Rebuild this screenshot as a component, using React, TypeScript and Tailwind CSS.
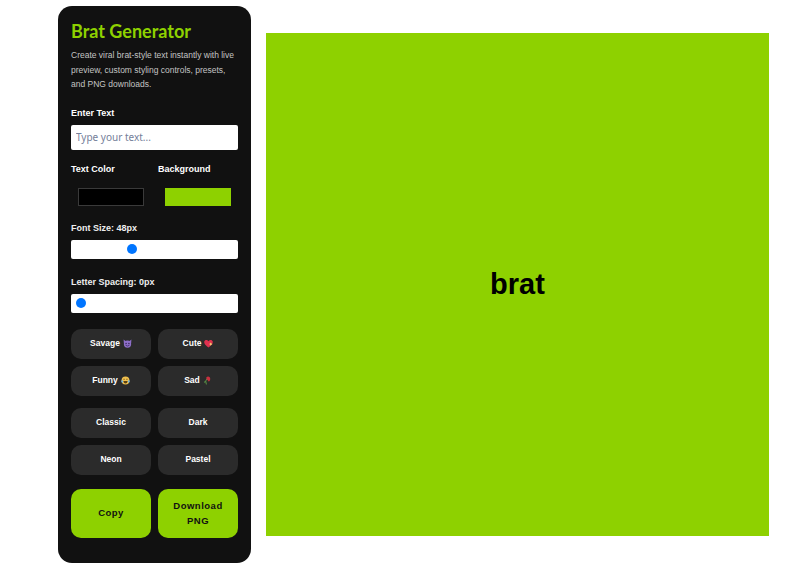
const bodyFont = "font-['Liberation_Sans',Arial,sans-serif]"

function DevilIcon() {
  return (
    <svg viewBox="0 0 16 16" className="w-[9px] h-[9px] shrink-0">
      <path d="M1 1 L5 4 L11 4 L15 1 L14.5 7 L1.5 7 Z" fill="#8e6fc9" />
      <circle cx="8" cy="9" r="6.5" fill="#8e6fc9" />
      <circle cx="5.5" cy="8" r="1.2" fill="#2f1f4d" />
      <circle cx="10.5" cy="8" r="1.2" fill="#2f1f4d" />
      <path d="M4.5 11 Q8 14 11.5 11" stroke="#2f1f4d" strokeWidth="1.2" fill="none" />
    </svg>
  )
}

function HeartIcon() {
  return (
    <svg viewBox="0 0 16 16" className="w-[9px] h-[9px] shrink-0">
      <path d="M8 15 C1 10 0 7 0.5 4.5 C1.2 1.5 5.5 0.5 8 4 C10.5 0.5 14.8 1.5 15.5 4.5 C16 7 15 10 8 15 Z" fill="#e0314f" />
      <path d="M12 6 L13 8 L15 9 L13 10 L12 12 L11 10 L9 9 L11 8 Z" fill="#f7d774" />
    </svg>
  )
}

function LaughIcon() {
  return (
    <svg viewBox="0 0 16 16" className="w-[9px] h-[9px] shrink-0">
      <circle cx="8" cy="8" r="7" fill="#f2c14e" />
      <path d="M4 6 Q5.5 4.5 7 6.5 M9 6.5 Q10.5 4.5 12 6" stroke="#5b4214" strokeWidth="1.1" fill="none" />
      <path d="M4 9 H12 Q11 13.5 8 13.5 Q5 13.5 4 9 Z" fill="#5b4214" />
      <path d="M0.5 8 Q0 12 3 12 Q4.5 10 3 7.5 Z" fill="#6fb7e8" />
      <path d="M15.5 8 Q16 12 13 12 Q11.5 10 13 7.5 Z" fill="#6fb7e8" />
    </svg>
  )
}

function WiltedRoseIcon() {
  return (
    <svg viewBox="0 0 16 16" className="w-[9px] h-[9px] shrink-0">
      <path d="M6 15 Q3 8 7 5" stroke="#5f9e4a" strokeWidth="1.6" fill="none" />
      <path d="M4.5 9 Q1.5 9 2 12 Q4.5 12 4.8 10 Z" fill="#5f9e4a" />
      <path d="M6 2 Q9 -0.5 12 2 Q14 6 11.5 9 Q10 10.5 9 8 Q7 7 6 5 Z" fill="#c9303f" />
    </svg>
  )
}

function PresetButton({ label, icon }: { label: string; icon?: React.ReactNode }) {
  return (
    <button
      type="button"
      className="h-[30px] rounded-[10px] bg-[#2b2b2b] text-white text-[8.5px] font-bold flex items-center justify-center gap-[3px]"
    >
      {label}
      {icon}
    </button>
  )
}

export default function App() {
  return (
    <div className={`h-[569px] w-[800px] bg-white flex items-center gap-[15px] pl-[58px] ${bodyFont}`}>
      {/* Controls */}
      <aside className="w-[193px] h-[557px] shrink-0 rounded-[14px] bg-[#111111] px-[13px] pt-[14px] flex flex-col">
        <h1 className="font-['Lato',sans-serif] text-[18px] leading-[22px] font-bold text-[#8ed100]">
          Brat Generator
        </h1>
        <p className="mt-[6px] text-[8.5px] leading-[14.5px] text-[#c4c4c4]">
          Create viral brat-style text instantly with live preview, custom styling controls, presets, and PNG downloads.
        </p>

        <label className="mt-[15px] text-[9px] leading-[12px] font-bold text-white">Enter Text</label>
        <input
          type="text"
          placeholder="Type your text..."
          className="mt-[6px] h-[25px] w-full rounded-[2px] bg-white px-[5px] font-['Noto_Sans',sans-serif] text-[10px] text-black placeholder:text-[#75809a] outline-none"
        />

        <div className="mt-[13px] grid grid-cols-2 gap-[7px] text-[9px] leading-[12px] font-bold text-white">
          <label>Text Color</label>
          <label>Background</label>
        </div>
        <div className="mt-[13px] grid grid-cols-2 gap-[7px]">
          <div className="px-[7px]">
            <div className="h-[18px] bg-black border border-[#3a3a3a]" />
          </div>
          <div className="px-[7px]">
            <div className="h-[18px] bg-[#8ed100]" />
          </div>
        </div>

        <label className="mt-[16px] text-[9px] leading-[12px] font-bold text-[#eeeeee]">Font Size: 48px</label>
        <input
          type="range"
          min={10}
          max={120}
          defaultValue={48}
          className="mt-[6px] h-[19px] w-full appearance-none rounded-[2px] bg-white px-[5px] [&::-webkit-slider-thumb]:appearance-none [&::-webkit-slider-thumb]:w-[10px] [&::-webkit-slider-thumb]:h-[10px] [&::-webkit-slider-thumb]:rounded-full [&::-webkit-slider-thumb]:bg-[#0075ff]"
        />

        <label className="mt-[17px] text-[9px] leading-[12px] font-bold text-[#eeeeee]">Letter Spacing: 0px</label>
        <input
          type="range"
          min={0}
          max={20}
          defaultValue={0}
          className="mt-[6px] h-[19px] w-full appearance-none rounded-[2px] bg-white px-[5px] [&::-webkit-slider-thumb]:appearance-none [&::-webkit-slider-thumb]:w-[10px] [&::-webkit-slider-thumb]:h-[10px] [&::-webkit-slider-thumb]:rounded-full [&::-webkit-slider-thumb]:bg-[#0075ff]"
        />

        <div className="mt-[16px] grid grid-cols-2 gap-[7px]">
          <PresetButton label="Savage" icon={<DevilIcon />} />
          <PresetButton label="Cute" icon={<HeartIcon />} />
          <PresetButton label="Funny" icon={<LaughIcon />} />
          <PresetButton label="Sad" icon={<WiltedRoseIcon />} />
        </div>

        <div className="mt-[12px] grid grid-cols-2 gap-[7px]">
          <PresetButton label="Classic" />
          <PresetButton label="Dark" />
          <PresetButton label="Neon" />
          <PresetButton label="Pastel" />
        </div>

        <div className="mt-[14px] grid grid-cols-2 gap-[7px]">
          <button type="button" className="h-[49px] rounded-[10px] bg-[#8ed100] text-[9.5px] font-bold tracking-[0.5px] text-[#111111]">
            Copy
          </button>
          <button type="button" className="h-[49px] rounded-[10px] bg-[#8ed100] text-[9.5px] leading-[15px] font-bold tracking-[0.5px] text-[#111111]">
            Download
            <br />
            PNG
          </button>
        </div>
      </aside>

      {/* Preview */}
      <main className="w-[503px] h-[503px] shrink-0 bg-[#8ed100] flex items-center justify-center">
        <span className="text-[29px] font-bold text-black">brat</span>
      </main>
    </div>
  )
}
